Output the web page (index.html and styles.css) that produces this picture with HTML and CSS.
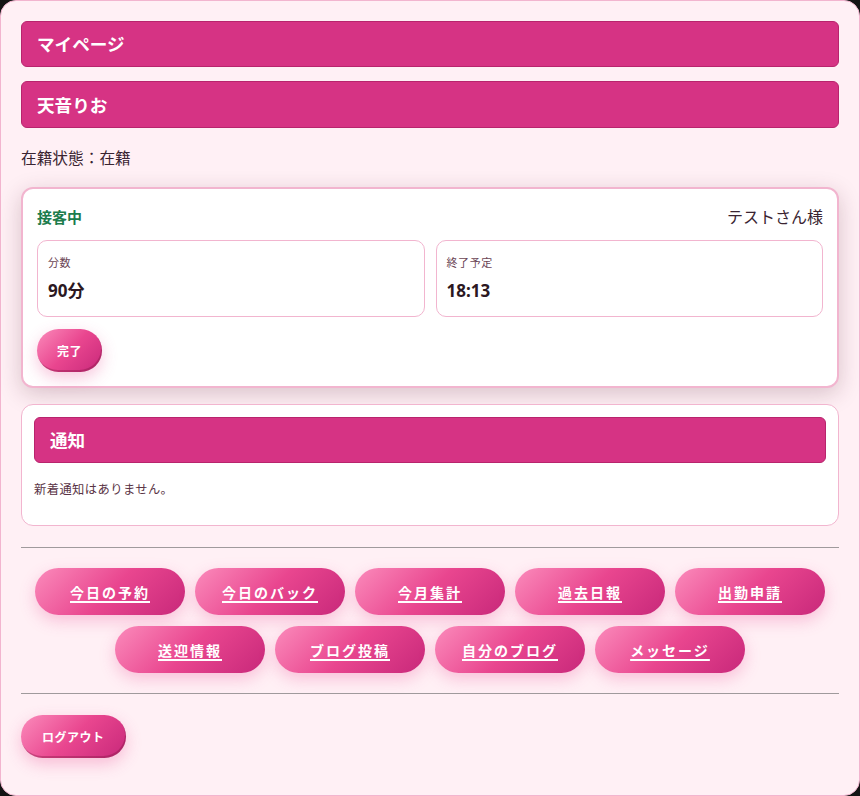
FILE: index.html
```html
<!DOCTYPE html>
<html lang="ja">
<head>
<meta charset="utf-8">
<title>マイページ</title>
<link rel="stylesheet" href="styles.css">
</head>
<body>
<div class="page">
  <h1 class="bar">マイページ</h1>
  <h2 class="bar">天音りお</h2>
  <p class="status">在籍状態：在籍</p>

  <section class="session">
    <div class="session-head">
      <span class="state">接客中</span>
      <span class="guest">テストさん様</span>
    </div>
    <div class="boxes">
      <div class="box">
        <div class="box-label">分数</div>
        <div class="box-value">90分</div>
      </div>
      <div class="box">
        <div class="box-label">終了予定</div>
        <div class="box-value">18:13</div>
      </div>
    </div>
    <button class="pill small">完了</button>
  </section>

  <section class="notice">
    <h3 class="bar">通知</h3>
    <p class="notice-text">新着通知はありません。</p>
  </section>

  <hr class="rule">

  <nav class="menu">
    <a class="pill link" href="#">今日の予約</a>
    <a class="pill link" href="#">今日のバック</a>
    <a class="pill link" href="#">今月集計</a>
    <a class="pill link" href="#">過去日報</a>
    <a class="pill link" href="#">出勤申請</a>
    <a class="pill link" href="#">送迎情報</a>
    <a class="pill link" href="#">ブログ投稿</a>
    <a class="pill link" href="#">自分のブログ</a>
    <a class="pill link" href="#">メッセージ</a>
  </nav>

  <hr class="rule rule-bottom">

  <button class="pill small logout">ログアウト</button>
</div>
</body>
</html>
```

FILE: styles.css
```css
html, body {
  margin: 0;
  padding: 0;
  height: 100%;
  background: #141414;
}
body {
  font-family: "Noto Sans CJK JP", "Noto Sans", sans-serif;
  color: #3a2431;
}
.page {
  box-sizing: border-box;
  height: 796px;
  width: 860px;
  background: #fff0f5;
  border: 1px solid #f2b5cf;
  border-radius: 16px;
  padding: 20px 20px;
  display: flex;
  flex-direction: column;
}
.bar {
  margin: 0;
  box-sizing: border-box;
  height: 46px;
  background: #d63384;
  border: 1px solid #b8246d;
  border-radius: 6px;
  color: #fff;
  font-size: 17.6px;
  font-weight: 700;
  line-height: 44px;
  padding: 0 15px;
}
h2.bar { margin-top: 14px; height: 47px; line-height: 45px; }
.status {
  margin: 18px 0 17px;
  font-size: 15.7px;
  line-height: 24px;
  color: #3a2431;
}
.session {
  background: #fff;
  border: 2px solid #f2b5cf;
  border-radius: 12px;
  box-shadow: 0 6px 22px rgba(80, 30, 50, 0.22);
  padding: 13px 14px 14px;
  display: flex;
  flex-direction: column;
  align-items: flex-start;
}
.session-head {
  align-self: stretch;
  display: flex;
  justify-content: space-between;
  align-items: center;
  height: 28px;
  margin-bottom: 10px;
}
.state {
  color: #1c7c4c;
  font-weight: 700;
  font-size: 15px;
}
.guest {
  font-size: 16px;
  color: #3a2431;
}
.boxes {
  align-self: stretch;
  display: grid;
  grid-template-columns: 1fr 1fr;
  gap: 11px;
  margin-bottom: 12px;
}
.box {
  box-sizing: border-box;
  height: 77px;
  border: 1px solid #f2b5cf;
  border-radius: 10px;
  padding: 12px 10px;
}
.box-label {
  font-size: 11px;
  letter-spacing: 0.6px;
  color: #6b4555;
  line-height: 18px;
}
.box-value {
  margin-top: 9px;
  font-family: "Noto Sans", "Noto Sans CJK JP", sans-serif;
  font-size: 17px;
  font-weight: 700;
  color: #2c1822;
  line-height: 22px;
}
.pill {
  border: none;
  border-radius: 999px;
  background: linear-gradient(135deg, #fb8bbb 0%, #e9468f 50%, #c8287a 100%);
  color: #fff;
  font-family: "Noto Sans CJK JP", "Noto Sans", sans-serif;
  font-weight: 700;
  box-shadow: 0 6px 16px rgba(233, 70, 143, 0.28);
}
.small {
  height: 43px;
  padding: 0 20px;
  font-size: 12px;
  letter-spacing: 0.5px;
  box-shadow: 0 6px 16px rgba(233, 70, 143, 0.3), inset -1px -2px 0 rgba(120, 20, 60, 0.35);
}
.notice {
  margin-top: 16px;
  background: #fff;
  border: 1px solid #f2b5cf;
  border-radius: 12px;
  padding: 12px 12px 12px;
}
.notice .bar { height: 46px; line-height: 44px; }
.notice-text {
  margin: 13px 0 11px;
  font-size: 12.3px;
  letter-spacing: 0.4px;
  color: #5a3446;
  line-height: 26px;
}
.rule {
  width: 100%;
  margin: 21px 0 20px;
  border: none;
  border-top: 1px solid #a09a9c;
  height: 0;
}
.rule-bottom {
  margin-top: 20px;
}
.menu {
  display: flex;
  flex-wrap: wrap;
  justify-content: center;
  gap: 11px 10px;
  padding: 0 0;
}
.link {
  box-sizing: border-box;
  width: 150px;
  height: 47px;
  display: flex;
  align-items: center;
  justify-content: center;
  font-size: 14px;
  letter-spacing: 2px;
  text-decoration: underline;
  text-underline-offset: 3px;
  text-decoration-thickness: 1.5px;
}
.logout {
  align-self: flex-start;
  margin-top: 1px;
  padding: 0 21px;
}
```
